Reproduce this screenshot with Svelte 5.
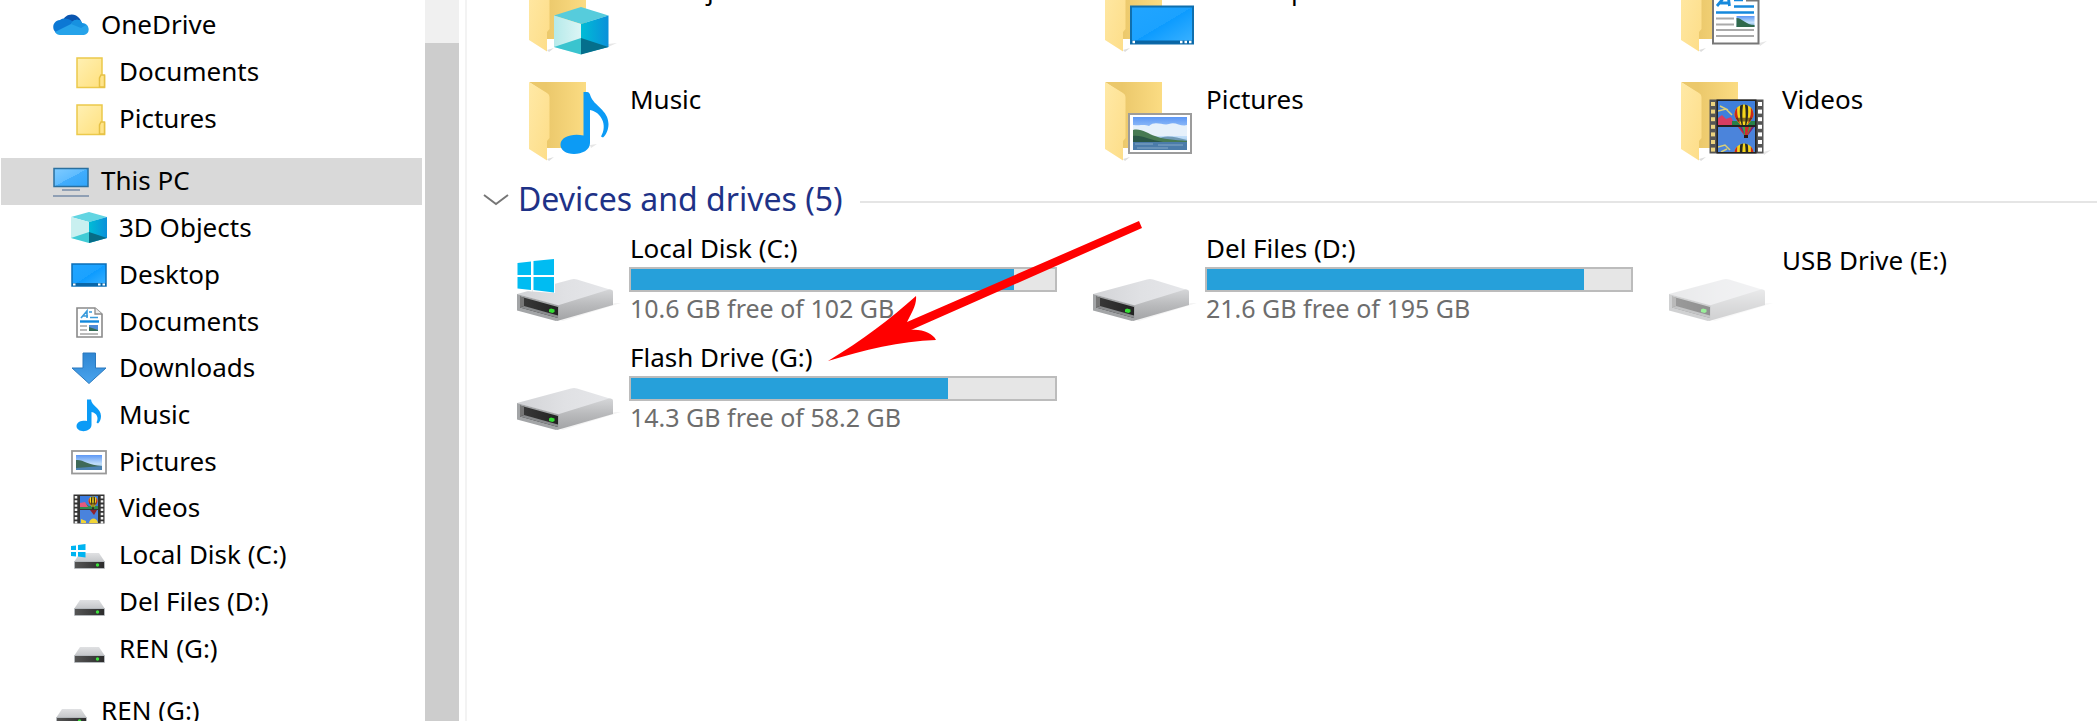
<script lang="ts">
  type Item = { label: string; icon: string };
  type Drive = { label: string; icon: string; used?: number; free?: string };

  const cloud: Item[] = [
    { label: 'Documents', icon: 'folder' },
    { label: 'Pictures', icon: 'folder' },
  ];
  const places: Item[] = [
    { label: '3D Objects', icon: 'cube' },
    { label: 'Desktop', icon: 'desktop' },
    { label: 'Documents', icon: 'document' },
    { label: 'Downloads', icon: 'download' },
    { label: 'Music', icon: 'music' },
    { label: 'Pictures', icon: 'picture' },
    { label: 'Videos', icon: 'video' },
    { label: 'Local Disk (C:)', icon: 'system' },
    { label: 'Del Files (D:)', icon: 'drive' },
    { label: 'REN (G:)', icon: 'drive' },
  ];
  const folders: Item[] = [
    { label: '3D Objects', icon: 'cube' },
    { label: 'Desktop', icon: 'desktop' },
    { label: 'Documents', icon: 'document' },
    { label: 'Music', icon: 'music' },
    { label: 'Pictures', icon: 'picture' },
    { label: 'Videos', icon: 'video' },
  ];
  const drives: Drive[] = [
    { label: 'Local Disk (C:)', icon: 'system', used: 90.3, free: '10.6 GB free of 102 GB' },
    { label: 'Del Files (D:)', icon: 'drive', used: 89, free: '21.6 GB free of 195 GB' },
    { label: 'USB Drive (E:)', icon: 'faded' },
    { label: 'Flash Drive (G:)', icon: 'drive', used: 74.8, free: '14.3 GB free of 58.2 GB' },
  ];
  const holes = [0, 1, 2, 3, 4, 5, 6];
</script>

{#snippet balloon(x: number, y: number, s: number)}
  <g transform="translate({x} {y}) scale({s})">
    <path d="M-10 0A10 10 0 0 1 10 0C10 5 5 9 3 13H-3C-5 9-10 5-10 0z" fill="#f5d51c" />
    <path d="M-10 0A10 10 0 0 1-7-7C-8 0-6 7-3 12-5 9-10 5-10 0zM10 0A10 10 0 0 0 7-7C8 0 6 7 3 12 5 9 10 5 10 0z" fill="#c8281c" />
    <path d="M-4-9C-5 0-4 7-2 13H-1C-2 5-2-3-1-10zM4-9C5 0 4 7 2 13H1C2 5 2-3 1-10z" fill="#2b2b20" />
    <path d="M-9 4H9L6 8H-6z" fill="#3a2b18" opacity=".6" />
    <rect x="-2" y="14" width="4" height="4" fill="#3b1e14" />
  </g>
{/snippet}

{#snippet smallIcon(name: string)}
  <svg class="small" viewBox="0 0 36 36" aria-hidden="true">
    {#if name === 'cloud'}
      <path d="M10 14C11 8 21 4 27 12L30 18 20 22 8 17z" fill="#0a55b0" />
      <path d="M7 27C-2 26-2 14 7 13 11 10 16 12 19 14L31 20 9 27z" fill="#0c78d4" />
      <path d="M18 17C20 12 27 11 29 16 37 16 38 27 31 28H7C5 28 3 27 2 25z" fill="#26a3ea" />
      <path d="M18 17C20 12 27 11 29 16L33 18 28 21z" fill="#1791e0" />
    {:else if name === 'folder'}
      <path d="M6 4H31V22H33.500V33.500H6z" fill="url(#note)" stroke="#ecc94b" stroke-width="1.500" />
      <path d="M28.500 33V24L30 21H33.500V33z" fill="#ffe48b" stroke="#e6c146" stroke-width="1.500" />
    {:else if name === 'pc'}
      <rect x="1" y="5.500" width="34" height="18" fill="url(#screen)" stroke="#2a6f9e" stroke-width="1.500" />
      <path d="M9 27H27M0 33H36" stroke="#8f9fb4" stroke-width="2" />
    {:else if name === 'cube'}
      <path d="M18 2 36 7 18 12 0 7z" fill="#62d5e2" />
      <path d="M0 7 18 12V32L0 28z" fill="#c9f0f0" />
      <path d="M36 7 18 12V33L36 28z" fill="url(#cubeSide)" />
      <path d="M0 28 18 22V33z" fill="#3fcbd5" />
      <path d="M36 28 18 22V33z" fill="#076c87" />
    {:else if name === 'desktop'}
      <rect x="1" y="7" width="34" height="22" fill="url(#desk)" stroke="#0b6fb8" stroke-width="1.500" />
      <path d="M1 27.500H35" stroke="#0966a8" stroke-width="3" />
      <path d="M2 27.500H4.500M27 27.500H29.500M31.500 27.500H34" stroke="#fff" stroke-width="2" />
    {:else if name === 'document'}
      <path d="M6 4H24L31 10V33H6z" fill="#fff" stroke="#8a8a8a" stroke-width="1.600" />
      <path d="M24 4V10H31" fill="#eee" stroke="#8a8a8a" stroke-width="1.300" />
      <path d="M10 14 16 7V14M12 12H17M18 8H21M19 13.500H27" fill="none" stroke="#3a9bdc" stroke-width="1.600" />
      <path d="M9 17.500H28" stroke="#1288dd" stroke-width="2.400" />
      <path d="M9 22H16M9 26H16M9 30H27" stroke="#a5a5a5" stroke-width="1.600" />
      <rect x="18" y="21" width="9" height="6" fill="#4f8bd8" />
      <path d="M18 23 27 26V27H18z" fill="#356d56" />
    {:else if name === 'download'}
      <path d="M12 3H24.500V18H35L18 33.500 1 18H12z" fill="url(#down)" stroke="#2b79be" />
    {:else if name === 'music'}
      <path d="M16 2.500H20C20.500 9 30 11 30 19 30 22 29 25 27 26.500L25.500 25.500C28 21 26 16 20.500 15V28C20 36 5.500 36 5.500 29 6 24 12 23.500 16 24z" fill="#0b9bf6" />
    {:else if name === 'picture'}
      <rect x="1" y="7" width="34" height="22.500" fill="#fff" stroke="#999" stroke-width="1.800" />
      <rect x="5" y="11" width="26" height="15" fill="url(#sky)" />
      <path d="M5 16C12 15 16 21 31 22V26H5z" fill="#3f6a58" />
      <path d="M5 24 31 22V26H5z" fill="#4d83b2" />
    {:else if name === 'video'}
      <rect x="2.500" y="4.500" width="31" height="29" fill="#333" />
      <path d="M5 6V34M31 6V34" stroke="#f4f4f4" stroke-width="2.600" stroke-dasharray="2.400 1.800" />
      <rect x="9" y="6" width="18" height="13" fill="#3b7be0" />
      <rect x="9" y="20" width="18" height="13" fill="#4a83dd" />
      <path d="M9 15 14 13 18 16H27V19H9z" fill="#2f8b4d" />
      <path d="M9 13 14 12 17 17H9z" fill="#e35a7c" />
      {@render balloon(22, 11, 0.45)}
      <path d="M19 20H26L23 25z" fill="#8d2330" />
      <path d="M18 33C19 27 26 27 27 33zM10 29 15 31V33H10z" fill="#f0d437" />
    {:else}
      <path d="M9 16H28L34 25H3z" fill="url(#lid)" />
      <rect x="3" y="24" width="31" height="8" rx="1" fill="#b5b9bd" />
      <rect x="4" y="25" width="29" height="6" fill="url(#panel)" />
      <circle cx="26.500" cy="28" r="1.700" fill="#3ee23e" />
      {#if name === 'system'}
        <path d="M0 9 5 8.500V13H0zM7 8 14.500 7V13H7zM0 15H5V19.500L0 19zM7 15H14.500V20.500L7 19.500z" fill="#00b4f1" />
      {/if}
    {/if}
  </svg>
{/snippet}

{#snippet largeIcon(name: string)}
  <svg class="large" viewBox="0 0 112 109" aria-hidden="true">
    {#if name === 'system' || name === 'drive' || name === 'faded'}
      <g opacity={name === 'faded' ? 0.5 : 1}>
        <path d="M42 95 98 78 104 78 46 96z" fill="#f4f4f4" />
        <path d="M0 69 54 54.500Q57 53.500 60 54.500L96 65.500 42 81z" fill="url(#top)" />
        <path d="M42 80 92 64.500Q96 64 96 67V80L40 96z" fill="url(#side)" />
        <path d="M0 69 42 80.500V95L39 96 0 85.500z" fill="#a3a5a7" />
        <path d="M3 71.500 41 82V93L3 82.500z" fill="url(#bay)" />
        <path d="M3 82.500 7 81 41 90.500V93z" fill="#8a8c8e" />
        <path d="M3 71.500 7 72.500V81L3 82.500z" fill="#777" />
        <path d="M32 84.500 34 83.500 37.500 84.500V87L35.500 88 32 87z" fill="#35df35" />
      </g>
      {#if name === 'system'}
        <path d="M0 37 14 35.500V50H0zM16.500 35 37 34V50H16.500zM0 52H14V65.500L0 64zM16.500 52H37V67L16.500 65.500z" fill="#fff" stroke="#fff" stroke-width="2" />
        <path d="M.5 38 14 36.500V50H.5zM16.500 36 37 34V50H16.500zM.5 52H14V65L.5 63.500zM16.500 52H37V67.500L16.500 65z" fill="#00bcf2" />
      {/if}
    {:else}
      <path d="M30 95 37 93 32 97z" fill="#ddd" />
      <path d="M12 18H69V84H30V30z" fill="url(#back)" />
      <path d="M12 18 30 29Q32.500 30.500 32.500 33V74L30 77V96.500L12 85z" fill="url(#flap)" />
      {#if name === 'cube'}
        <path d="M91 89 100 88 91 92z" fill="#e6e6e6" />
        <path d="M64 52 91.500 60.500 64 69 37 60.500z" fill="#56ccdc" />
        <path d="M37 60.500 64 69V99L37 92z" fill="url(#cubeFace)" />
        <path d="M91.500 60.500 64 69V99L91.500 92z" fill="url(#cubeSide)" />
        <path d="M37 92 64 83V99.500z" fill="#3ac4cf" />
        <path d="M91.500 92 64 83V99.500z" fill="#056f8c" />
      {:else if name === 'desktop'}
        <rect x="38" y="51.500" width="62" height="37" fill="url(#desk)" stroke="#0f6fae" stroke-width="2" />
        <path d="M38 87H100" stroke="#0a65a4" stroke-width="3" />
        <path d="M39.500 87H42M87 87H89.500M91.500 87H94M96 87H98.500" stroke="#fff" stroke-width="2.400" />
      {:else if name === 'document'}
        <path d="M90 88 98 86 91 91z" fill="#e6e6e6" />
        <rect x="44" y="26" width="45.500" height="62.500" fill="#fff" stroke="#777" stroke-width="2" />
        <path d="M48 51 57 40H59L60.500 51M51 48H60" fill="none" stroke="#1689dc" stroke-width="2.800" />
        <path d="M65 45H74M65 51.500H85M47 57.500H85" stroke="#1689dc" stroke-width="2.400" />
        <path d="M77 45H90" stroke="#777" stroke-width="3" />
        <path d="M47 63.500H65M47 69.500H65M47 75H85M47 81H85" stroke="#aaa" stroke-width="2" />
        <rect x="67.500" y="61" width="18" height="11" fill="url(#sky)" />
        <path d="M67.500 63C73 63 77 70 85.500 70V72H67.500z" fill="#316a4d" />
      {:else if name === 'music'}
        <path d="M73 81 80 80 74 84z" fill="#e6e6e6" />
        <path d="M66.500 28H70C72 28 73 30 73.500 32 77 42 91.500 46 91.500 60 91.500 66 89 71 86 73.500L84 72.500C91 61 84 48 73 46V79C73 86 65 90 57 90 49 90 43 86 43.500 80 44 73 55 69 66.500 71.500z" fill="#0c9bf5" />
      {:else if name === 'picture'}
        <rect x="36" y="50" width="62" height="39" fill="#fff" stroke="#9c9c9c" stroke-width="2" />
        <rect x="40" y="53" width="54" height="33" fill="url(#sky)" />
        <path d="M40 61C48 62 50 60 56 62 62 56 70 62 76 60 82 57 88 63 94 61V72H40z" fill="#e6f1fb" />
        <path d="M64 76C71 70 82 73 94 76V78H64z" fill="#6f9ab6" />
        <path d="M40 66C48 64 55 70 62 72 69 75 82 76 94 77V79H40z" fill="#467a53" />
        <path d="M40 72C50 71 56 76 70 78H40z" fill="#295747" />
        <rect x="40" y="78" width="54" height="8" fill="#4b7caa" />
        <path d="M42 80H60M65 81H90M44 84H75" stroke="#86a9c7" />
      {:else if name === 'video'}
        <path d="M94 88 102 86 95 91z" fill="#e6e6e6" />
        <rect x="40.500" y="35.500" width="54" height="54" fill="#555" />
        <rect x="47.500" y="35.500" width="40" height="54" fill="#222" />
        {#each holes as hole}
          <rect x="42" y={38 + hole * 7.6} width="4" height="4" fill="#ecd37e" />
          <rect x="89" y={38 + hole * 7.6} width="4" height="4" fill="#fff" />
        {/each}
        <svg x="49" y="37" width="37" height="24" viewBox="0 0 37 24">
          <rect width="37" height="24" fill="#3f7fdc" />
          <path d="M0 10 8 8 14 14M2 5 10 9" stroke="#d9cf78" stroke-width="1.500" fill="none" />
          <path d="M0 17 4 14 8 18 13 16 17 24H0z" fill="#d83d62" />
          <path d="M14 20H37V24H14z" fill="#28804a" />
          {@render balloon(26, 13, 0.95)}
        </svg>
        <svg x="49" y="63" width="37" height="25" viewBox="0 0 37 25">
          <rect width="37" height="25" fill="#4b84db" />
          <path d="M20 0H36L30 8H26z" fill="#d22c2c" />
          <path d="M24 0H27V8H26zM31 0H33L29 8z" fill="#38a350" />
          <path d="M22 0H24L27 8zM34 0H36L30 8z" fill="#602894" />
          <rect x="26" y="8" width="4" height="3" fill="#2b1a14" />
          <path d="M0 20 7 18 12 23M3 25 9 22" stroke="#d9cf78" stroke-width="1.500" fill="none" />
          {@render balloon(26, 26, 0.95)}
        </svg>
      {/if}
    {/if}
  </svg>
{/snippet}

<svg class="paints" aria-hidden="true">
  <defs>
    <linearGradient id="note" x2="1" y2="1"><stop stop-color="#fff0b3" /><stop offset="1" stop-color="#ffe07c" /></linearGradient>
    <linearGradient id="screen" x2="1" y2="1"><stop stop-color="#7fcbff" /><stop offset=".5" stop-color="#5fbcff" /><stop offset=".5" stop-color="#42adfc" /><stop offset="1" stop-color="#2fa4fa" /></linearGradient>
    <linearGradient id="desk" x2="1" y2="1"><stop stop-color="#21a5ff" /><stop offset=".5" stop-color="#1ba2ff" /><stop offset=".5" stop-color="#0c9bff" /><stop offset="1" stop-color="#3cb2ff" /></linearGradient>
    <linearGradient id="cubeSide"><stop stop-color="#00bcd6" /><stop offset="1" stop-color="#0a90da" /></linearGradient>
    <linearGradient id="cubeFace"><stop stop-color="#b5eaea" /><stop offset="1" stop-color="#dcf5f5" /></linearGradient>
    <linearGradient id="down" x2="0" y2="1"><stop stop-color="#2f86d2" /><stop offset="1" stop-color="#49a4ee" /></linearGradient>
    <linearGradient id="sky" x2="0" y2="1"><stop stop-color="#5c97f5" /><stop offset=".6" stop-color="#c3e0fa" /><stop offset="1" stop-color="#6b9fce" /></linearGradient>
    <linearGradient id="lid" x2="0" y2="1"><stop stop-color="#e0e1e3" /><stop offset="1" stop-color="#c3c5c8" /></linearGradient>
    <linearGradient id="panel"><stop stop-color="#555" /><stop offset="1" stop-color="#2c2c2c" /></linearGradient>
    <linearGradient id="back"><stop offset=".3" stop-color="#ebc86b" /><stop offset="1" stop-color="#fbdc83" /></linearGradient>
    <linearGradient id="flap" x2="1" y2="1"><stop stop-color="#ffe9a6" /><stop offset="1" stop-color="#fddd88" /></linearGradient>
    <linearGradient id="top" x2="1" y2="0"><stop stop-color="#d2d3d6" /><stop offset=".5" stop-color="#e0e1e4" /><stop offset="1" stop-color="#e6e7ea" /></linearGradient>
    <linearGradient id="side" x2="0" y2="1"><stop stop-color="#d5d6d8" /><stop offset=".5" stop-color="#b9babc" /><stop offset="1" stop-color="#a2a3a5" /></linearGradient>
    <linearGradient id="bay"><stop stop-color="#3a3a3a" /><stop offset="1" stop-color="#222" /></linearGradient>
  </defs>
</svg>

<div class="explorer">
  <nav class="sidebar" aria-label="Folders">
    <div class="tree">
      <div class="group cloud">
        <a class="row" href="#onedrive">{@render smallIcon('cloud')}<span>OneDrive</span></a>
        {#each cloud as item}
          <a class="row child" href="#item">{@render smallIcon(item.icon)}<span>{item.label}</span></a>
        {/each}
      </div>
      <div class="group pc">
        <a class="row selected" href="#pc" aria-current="page">{@render smallIcon('pc')}<span>This PC</span></a>
        {#each places as item}
          <a class="row child" href="#item">{@render smallIcon(item.icon)}<span>{item.label}</span></a>
        {/each}
      </div>
      <div class="group">
        <a class="row" href="#ren">{@render smallIcon('drive')}<span>REN (G:)</span></a>
      </div>
    </div>
    <div class="scrollbar"><div class="thumb"></div></div>
  </nav>

  <main>
    <div class="content">
      <div class="tiles">
        {#each folders as item}
          <a class="tile" href="#item">
            {@render largeIcon(item.icon)}
            <span class="info name-only"><span class="name">{item.label}</span></span>
          </a>
        {/each}
      </div>

      <h2>
        <button type="button" aria-expanded="true">
          <svg class="chevron" viewBox="0 0 26 14" aria-hidden="true"><path d="M1 3 13 12 25 3" fill="none" stroke="#767676" stroke-width="2" /></svg>
          Devices and drives (5)
        </button>
      </h2>

      <div class="tiles">
        {#each drives as drive}
          <a class="tile" href="#drive">
            {@render largeIcon(drive.icon)}
            <span class="info" class:name-only={!drive.free}>
              <span class="name">{drive.label}</span>
              {#if drive.free}
                <span class="bar"><span class="fill" style="width: {drive.used}%"></span></span>
                <span class="free">{drive.free}</span>
              {/if}
            </span>
          </a>
        {/each}
      </div>
    </div>

    <svg class="arrow" viewBox="0 0 316 142" aria-hidden="true">
      <path d="M0 141C35 120 62 99 88 76 89 85 83 94 79 102L311 1 314 8 83 110C95 109 105 114 108 120 72 121 36 130 0 141z" fill="#f00" />
    </svg>
  </main>
</div>

<style>
  :global(body) {
    margin: 0;
    background: #fff;
  }
  .explorer {
    display: flex;
    height: 100vh;
    overflow: hidden;
    font: 26px/34px "Noto Sans", "Open Sans", sans-serif;
    color: #000;
  }
  .paints {
    position: absolute;
    width: 0;
    height: 0;
  }
  a {
    color: inherit;
    text-decoration: none;
  }
  .sidebar {
    display: flex;
    flex: none;
    gap: 3px;
    width: 459px;
    padding-right: 6px;
    border-right: 2px solid #f3f3f3;
  }
  .tree {
    display: flex;
    flex: 1;
    flex-direction: column;
    gap: 16px;
    padding: 1px 0 0 1px;
  }
  .group {
    display: grid;
    flex: none;
    grid-auto-rows: minmax(0, 1fr);
  }
  .cloud {
    height: 141px;
  }
  .pc {
    height: 514px;
  }
  .row {
    display: flex;
    align-items: center;
    gap: 12px;
    min-height: 46px;
    padding-left: 52px;
    white-space: nowrap;
  }
  .row span {
    padding-bottom: 2px;
  }
  .child {
    padding-left: 70px;
  }
  .selected {
    background: #d9d9d9;
  }
  .small {
    flex: none;
    width: 36px;
    height: 36px;
  }
  .scrollbar {
    width: 34px;
    padding-top: 43px;
    box-sizing: border-box;
    display: flex;
    background: #f0f0f0;
  }
  .thumb {
    flex: 1;
    background: #cdcdcd;
  }
  main {
    position: relative;
    flex: 1;
    min-width: 0;
    overflow: hidden;
  }
  .content {
    margin-top: -45px;
    padding-left: 16px;
  }
  .tiles {
    display: grid;
    grid-template-columns: 576fr 576fr 428fr;
    grid-auto-rows: 109px;
    padding-left: 34px;
  }
  .tile {
    display: flex;
    min-width: 0;
  }
  .large {
    flex: none;
    width: 112px;
    height: 109px;
  }
  .info {
    display: flex;
    flex: 1;
    flex-direction: column;
    max-width: 428px;
    padding-top: 6px;
    white-space: nowrap;
  }
  .name-only {
    padding-top: 18px;
  }
  .name,
  .free {
    padding-left: 1px;
  }
  .bar {
    box-sizing: border-box;
    height: 25px;
    margin-top: 2px;
    border: 2px solid #bcbcbc;
    background: #e6e6e6;
  }
  .fill {
    display: block;
    height: 100%;
    background: #26a0da;
  }
  .free {
    font-size: 25px;
    line-height: 32px;
    color: #6d6d6d;
  }
  h2 {
    display: flex;
    align-items: center;
    gap: 17px;
    height: 52px;
    margin: 0;
  }
  h2::after {
    content: "";
    flex: 1;
    height: 2px;
    margin-top: 5px;
    background: #e5e5e5;
  }
  button {
    display: flex;
    align-items: center;
    gap: 9px;
    padding: 0;
    border: 0;
    background: none;
    font: 32px/42px "Noto Sans", "Open Sans", sans-serif;
    color: #1e3287;
  }
  .chevron {
    width: 26px;
    height: 14px;
  }
  .arrow {
    position: absolute;
    top: 220px;
    left: 361px;
    width: 316px;
    height: 142px;
  }
</style>
